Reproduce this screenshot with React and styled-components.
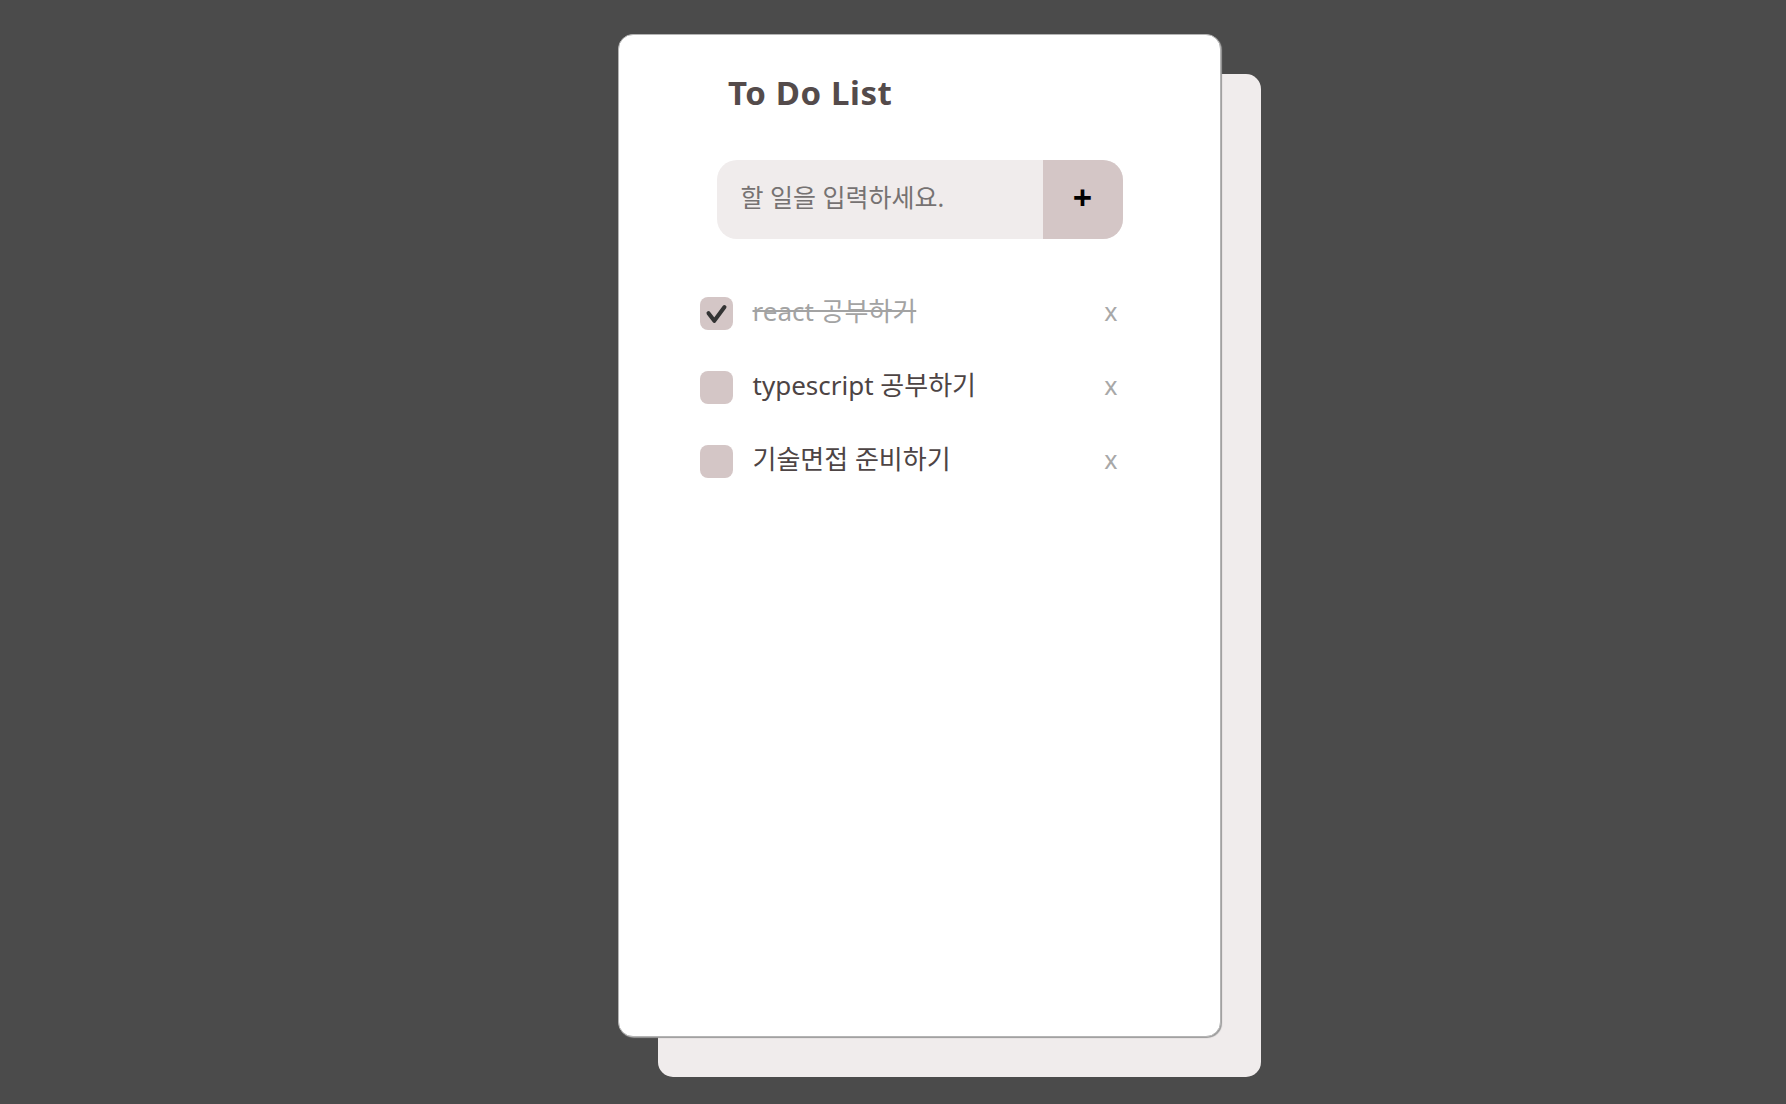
import React, { useState } from 'react'
import styled, { createGlobalStyle } from 'styled-components'

const GlobalStyle = createGlobalStyle`
    * { box-sizing: border-box; }
    body {
        margin: 0;
        background: #4b4b4b;
        font-family: "Noto Sans", "Noto Sans CJK KR", sans-serif;
    }
`

const initialTodos = [
    { id: 1, text: 'react 공부하기', done: true },
    { id: 2, text: 'typescript 공부하기', done: false },
    { id: 3, text: '기술면접 준비하기', done: false },
]

function App() {
    const [todos, setTodos] = useState(initialTodos)
    const [value, setValue] = useState('')

    const toggle = (id) =>
        setTodos(todos.map((t) => (t.id === id ? { ...t, done: !t.done } : t)))
    const remove = (id) => setTodos(todos.filter((t) => t.id !== id))
    const add = (e) => {
        e.preventDefault()
        if (!value.trim()) return
        setTodos([...todos, { id: Date.now(), text: value, done: false }])
        setValue('')
    }

    return (
        <Page>
            <GlobalStyle />
            <Card>
                <Title>To Do List</Title>

                <Form onSubmit={add}>
                    <Input
                        value={value}
                        onChange={(e) => setValue(e.target.value)}
                        placeholder="할 일을 입력하세요."
                    />
                    <AddButton type="submit">+</AddButton>
                </Form>

                <List>
                    {todos.map((todo) => (
                        <Row key={todo.id}>
                            <CheckBox $checked={todo.done} onClick={() => toggle(todo.id)}>
                                {todo.done && (
                                    <svg width="33" height="33" viewBox="0 0 33 33">
                                        <path
                                            d="M8.5 16.2 L14.3 23.8 L24.5 10"
                                            fill="none"
                                            stroke="#333"
                                            strokeWidth="4"
                                            strokeLinecap="round"
                                            strokeLinejoin="round"
                                        />
                                    </svg>
                                )}
                            </CheckBox>
                            <Label $done={todo.done}>{todo.text}</Label>
                            <DeleteButton onClick={() => remove(todo.id)}>x</DeleteButton>
                        </Row>
                    ))}
                </List>
            </Card>
        </Page>
    )
}

const Page = styled.div`
    min-height: 1104px;
    padding: 34px 0 0 618px;
`

const Card = styled.div`
    width: 603px;
    height: 1003px;
    background: #fff;
    border: 1px solid #b4b4b4;
    border-radius: 15px;
    box-shadow: 1px 1px 1px #9a9a9a, 40px 40px 0 #f0ecec;
    display: flex;
    flex-direction: column;
    align-items: center;
    padding-top: 36px;
`

const Title = styled.h1`
    align-self: flex-start;
    margin: 0 0 0 109px;
    font-size: 33px;
    font-weight: 700;
    letter-spacing: 0.6px;
    line-height: 43.6px;
    color: #544b4b;
`

const Form = styled.form`
    display: flex;
    width: 406px;
    height: 79px;
    margin-top: 45px;
    border-radius: 20px;
    overflow: hidden;
    background: #f0ecec;
`

const Input = styled.input`
    flex: 1;
    min-width: 0;
    border: none;
    outline: none;
    background: transparent;
    padding: 0 0 4px 24px;
    font-family: "Noto Sans", "Noto Sans CJK KR", sans-serif;
    font-size: 25px;
    color: #4d4444;

    &::placeholder {
        color: #767272;
    }
`

const AddButton = styled.button`
    width: 80px;
    border: none;
    background: #d4c6c6;
    color: #000;
    font-family: "Noto Sans", sans-serif;
    font-size: 34px;
    font-weight: 700;
    line-height: 1;
    padding: 0 0 4px;
    cursor: pointer;
`

const List = styled.ul`
    list-style: none;
    width: 440px;
    margin: 58px 0 0;
    padding: 0;
    display: flex;
    flex-direction: column;
    gap: 40px;
`

const Row = styled.li`
    display: flex;
    align-items: center;
    height: 34px;
`

const CheckBox = styled.button`
    flex: none;
    width: 33px;
    height: 33px;
    padding: 0;
    border: none;
    border-radius: 8px;
    background: #d4c6c6;
    cursor: pointer;
    display: flex;

    svg { display: block; }
`

const Label = styled.span`
    flex: 1;
    margin: 0 0 5px 20px;
    font-size: 26px;
    line-height: 34px;
    color: ${({ $done }) => ($done ? '#a3a3a3' : '#4d4444')};
    text-decoration: ${({ $done }) => ($done ? 'line-through' : 'none')};
`

const DeleteButton = styled.button`
    border: none;
    background: none;
    padding: 0 22px 5px 0;
    font-family: "Noto Sans", sans-serif;
    font-size: 25px;
    line-height: 34px;
    color: #a8a8a8;
    cursor: pointer;
`

export default App
